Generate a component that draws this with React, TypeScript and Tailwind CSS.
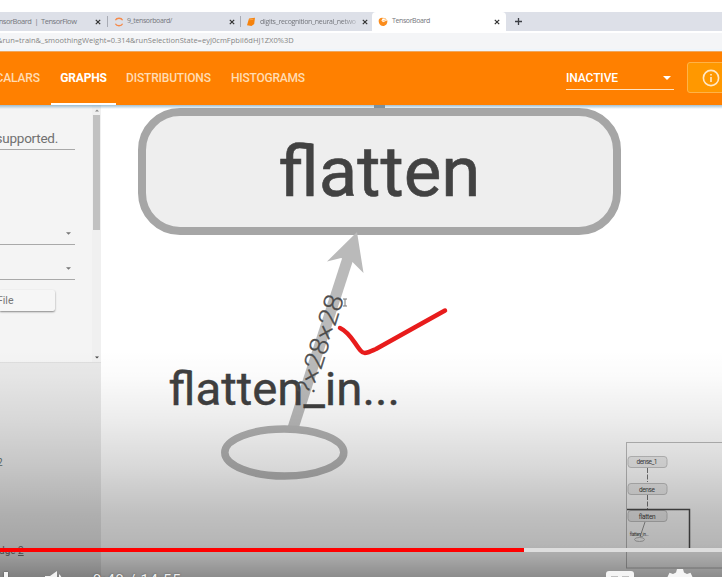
import React from "react";

function Favicon({ kind }: { kind: "jupyter" | "notebook" | "tensor" }) {
  if (kind === "jupyter") {
    return (
      <svg className="h-[10px] w-[10px] shrink-0" viewBox="0 0 10 10" fill="none" stroke="#f58a4b" strokeWidth="1.3">
        <path d="M1.4 3.2C2.6 .6 7.4 .6 8.6 3.2M1.4 6.8C2.6 9.4 7.4 9.4 8.6 6.8" />
      </svg>
    );
  }
  if (kind === "notebook") {
    return (
      <svg className="h-[10px] w-[10px] shrink-0" viewBox="0 0 10 10">
        <path d="M3 1.5 9 .8 8.2 7 5.5 9 1 8.2Z" fill="#f5820d" />
        <path d="M3.4 2.8 7.4 2.3" stroke="#ffb566" strokeWidth=".6" />
      </svg>
    );
  }
  return (
    <svg className="h-[10px] w-[10px] shrink-0" viewBox="0 0 10 10">
      <path d="M.8 2.8C1.5 1 3.5.4 5 .9L3.4 3.6 5 5.3 9.3 3.2C9.8 6.5 7.8 9 5 9 2 9 .2 6 .8 2.8Z" fill="#fb8c1c" />
      <path d="M4.2 4.2 8.6 2.6M5 1.2 8 1.8" stroke="#ffc98a" strokeWidth="1.1" />
    </svg>
  );
}

function Cross() {
  return (
    <svg className="h-[6px] w-[6px] shrink-0" viewBox="0 0 6 6" stroke="#333" strokeWidth="1.2">
      <path d="M.8.8 5.2 5.2M5.2.8.8 5.2" />
    </svg>
  );
}

function BrowserTabs() {
  return (
    <div className="flex h-[19px] shrink-0 items-center bg-[#dde0e8] font-['Open_Sans',sans-serif] text-[7.5px] text-[#74767c]">
      <div className="flex h-full w-[107px] items-center overflow-hidden">
        <span className="-ml-[5px] w-[100px] whitespace-nowrap tracking-[-0.47px]">
          ensorBoard&nbsp; |&nbsp; TensorFlow
        </span>
        <Cross />
      </div>
      <div className="flex h-[11px] w-[133px] items-center border-l border-[#a8abb4] pl-[6px]">
        <Favicon kind="jupyter" />
        <span className="ml-[3px] w-[102px] whitespace-nowrap text-[7px] tracking-[-0.38px]">9_tensorboard/</span>
        <Cross />
      </div>
      <div className="flex h-[11px] w-[132px] items-center border-l border-[#a8abb4] pl-[5px]">
        <Favicon kind="notebook" />
        <span className="ml-[4px] mr-[5px] w-[97px] whitespace-nowrap text-[7px] leading-[12px] tracking-[-0.3px] [mask-image:linear-gradient(to_right,#000_85%,rgba(0,0,0,0.3))]">
          digits_recognition_neural_netwo
        </span>
        <Cross />
      </div>
      <div className="flex h-full w-[134px] items-center rounded-t-[4px] bg-white pl-[6px]">
        <Favicon kind="tensor" />
        <span className="ml-[4px] w-[102px] whitespace-nowrap text-[7px] tracking-[-0.4px]">TensorBoard</span>
        <Cross />
      </div>
      <svg className="ml-[9px] h-[7px] w-[7px]" viewBox="0 0 7 7" stroke="#3c3f45" strokeWidth="1.3">
        <path d="M3.5 0V7M0 3.5H7" />
      </svg>
    </div>
  );
}

function Header() {
  return (
    <div className="flex h-[54px] shrink-0 items-center overflow-hidden border-t border-[#f0a75c] bg-[#ff8000] font-[Roboto,sans-serif] text-[12px] font-medium text-[#ffdcb2]">
      <div className="flex h-full w-[51px] items-center justify-end pb-px pr-[11px]">
        <span className="whitespace-nowrap tracking-[-0.1px]">SCALARS</span>
      </div>
      <div className="flex h-full w-[65px] items-center justify-center border-b-2 border-t border-b-white border-t-transparent text-white">
        <span className="font-bold tracking-[-0.15px]">GRAPHS</span>
      </div>
      <span className="mb-px ml-[10px] w-[85px] whitespace-nowrap tracking-[-0.17px]">DISTRIBUTIONS</span>
      <span className="mb-px ml-[20px] whitespace-nowrap tracking-[-0.22px]">HISTOGRAMS</span>
      <div className="mb-px ml-auto flex h-[24px] w-[108px] shrink-0 items-center justify-between border-b border-[#ffe3c2] pr-[3px] text-white">
        <span className="tracking-[-0.1px]">INACTIVE</span>
        <svg className="h-[4px] w-[8px]" viewBox="0 0 8 4" fill="#fff"><path d="M0 0H8L4 4Z" /></svg>
      </div>
      <div className="mb-[2px] ml-[13px] mr-[-9px] flex h-[31px] w-[44px] shrink-0 items-center rounded-[3px] border border-[#ffb347] bg-[#ff9800] pl-[14px]">
        <svg className="h-[18px] w-[18px]" viewBox="0 0 18 18" fill="none" stroke="#ffe8c7" strokeWidth="1.6">
          <circle cx="9" cy="9" r="7.6" />
          <path d="M9 8V13M9 5V6.6" />
        </svg>
      </div>
    </div>
  );
}

function Caret({ className }: { className: string }) {
  return (
    <svg className={className} viewBox="0 0 6 3"><path d="M0 0H6L3 3Z" /></svg>
  );
}

function Sidebar() {
  return (
    <div className="flex w-[101px] shrink-0 flex-col bg-[#e9e9e9] font-[Roboto,sans-serif]">
      <div className="flex h-[258px] shrink-0 border-b border-[#dedede] bg-[#f4f4f4]">
        <div className="flex w-[92px] flex-col overflow-hidden">
          <div className="flex h-[45px] w-[75px] items-end justify-end border-b border-[#a9a9a9] pb-[2px] pr-[17px]">
            <span className="whitespace-nowrap text-[13.5px] leading-[17px] tracking-[-0.25px] text-[#707070]">supported.</span>
          </div>
          <div className="flex h-[95px] w-[75px] items-end justify-end border-b border-[#a9a9a9] pb-[9px] pr-[4px]">
            <Caret className="h-[3px] w-[5px] fill-[#777]" />
          </div>
          <div className="flex h-[35px] w-[75px] items-end justify-end border-b border-[#a9a9a9] pb-[9px] pr-[4px]">
            <Caret className="h-[3px] w-[5px] fill-[#777]" />
          </div>
          <div className="mt-[10px] flex h-[21px] w-[55px] items-center justify-start rounded-r-[2px] bg-[#f6f6f6] text-[10.5px] text-[#777] shadow-[0_1px_2px_rgba(0,0,0,0.45)]">
            <span className="-ml-[3px]">File</span>
          </div>
        </div>
        <div className="flex w-[9px] flex-col items-center bg-[#f0f0f0]">
          <Caret className="mb-[3px] mt-[4px] h-[3px] w-[4px] rotate-180 fill-[#888]" />
          <div className="h-[115px] w-[7px] bg-[#c1c1c1]" />
          <Caret className="mb-[3px] mt-auto h-[3px] w-[4px] fill-[#444]" />
        </div>
      </div>
      <div className="mt-[94px] overflow-hidden text-[10px] leading-[12px] text-[#61706f]">
        <span className="-ml-[3px]">2</span>
      </div>
      <div className="mt-[76px] overflow-hidden text-[10px] leading-[12px] text-[#707070]">
        <span className="-ml-[1px] whitespace-nowrap">dge <u>2</u></span>
      </div>
    </div>
  );
}

function Graph() {
  return (
    <svg className="h-[472px] w-[621px] shrink-0 bg-white font-[Roboto,sans-serif]" viewBox="101 105 621 472">
      <rect x="374" y="100" width="11" height="12" fill="#8e8e8e" />
      <rect x="142" y="112" width="475" height="119" rx="38" fill="#eee" stroke="#a6a6a6" strokeWidth="8" />
      <text x="278.5" y="196" fontSize="69.5" textLength="202" lengthAdjust="spacingAndGlyphs" fill="#424242" stroke="#424242" strokeWidth=".6">flatten</text>
      <path d="M293 428 348 258" stroke="#bababa" strokeWidth="11" />
      <path d="M357 232 363.5 273 352.5 262 341 258 327 261.5Z" fill="#bababa" />
      <text x="168.5" y="405" fontSize="46" textLength="231.5" lengthAdjust="spacingAndGlyphs" fill="#404040" stroke="#404040" strokeWidth=".4">flatten_in...</text>
      <g transform="translate(312.5 397) rotate(-72.3)">
        <text x="0" y="0" fontSize="26" fontWeight="300" textLength="104" lengthAdjust="spacingAndGlyphs" fill="#4c4c4c" stroke="#4c4c4c" strokeWidth=".3">?×28×28</text>
      </g>
      <path d="M343 299H347M345 299V306M343 306H347" stroke="#777" strokeWidth="1" fill="none" />
      <ellipse cx="284.3" cy="452.5" rx="59.5" ry="23.5" fill="#fff" stroke="#b2b2b2" strokeWidth="7.5" />
      <g stroke="#bcbcbc" fill="none">
        <rect x="626.5" y="442.5" width="110" height="125.5" />
        <g fill="#ededed" stroke="#c5c5c5">
          <rect x="628" y="456.5" width="39" height="11" rx="3" />
          <rect x="628" y="483.5" width="39" height="11" rx="3" />
          <rect x="628" y="510.5" width="39" height="11" rx="3" />
        </g>
        <path d="M647.5 468V482M647.5 495V509" stroke="#777" strokeDasharray="5 1.5" />
        <path d="M645 522 640 537" stroke="#999" />
        <ellipse cx="639.5" cy="539.5" rx="5" ry="2" />
        <path d="M627 509.5H689.5V550H627" stroke="#4d4d4d" strokeWidth="1.5" />
      </g>
      <g fill="#444" fontSize="6.5" textAnchor="middle">
        <text x="647" y="464.3" textLength="21">dense_1</text>
        <text x="647" y="491.5" textLength="16">dense</text>
        <text x="647" y="518.5" textLength="17">flatten</text>
        <text x="639" y="536" fontSize="4.5" textLength="19">flatten_in...</text>
      </g>
    </svg>
  );
}

function PlayerOverlay() {
  return (
    <div className="absolute inset-0 overflow-hidden">
      <div className="absolute inset-x-0 bottom-0 h-[227px] bg-[linear-gradient(to_bottom,transparent_0px,rgba(0,0,0,0.015)_25px,rgba(0,0,0,0.075)_70px,rgba(0,0,0,0.15)_115px,rgba(0,0,0,0.25)_165px,rgba(0,0,0,0.29)_195px,rgba(0,0,0,0.34)_207px,rgba(0,0,0,0.45)_227px)]" />
      <svg className="absolute inset-0 h-[577px] w-[722px]" viewBox="0 0 722 577" fill="none">
        <path d="M340 328C351 333 355 345 361 351C364 355 369 352 376 349L445 310.5" stroke="#e81c1c" strokeWidth="4.5" strokeLinecap="round" strokeLinejoin="round" />
      </svg>
      <div className="absolute inset-x-0 top-[548px] flex h-[4px] bg-[#dedede]">
        <div className="w-[524px] bg-[#f00]" />
      </div>
      <div className="absolute inset-x-0 top-[568px] flex h-[24px] items-start overflow-hidden font-[Roboto,sans-serif] text-[#eee]">
        <div className="ml-[4px] mt-[4px] h-[16px] w-[4px] bg-[#f4f4f4] shadow-[0_0_2px_rgba(0,0,0,0.5)]" />
        <svg className="ml-[36px] mt-[2px] h-[20px] w-[22px]" viewBox="0 0 22 20" fill="#f2f2f2">
          <path d="M1 6H6L13 1V19L6 14H1ZM15 4C19 7 19 13 15 16V13C17 11 17 9 15 7Z" />
        </svg>
        <span className="ml-[27px] mt-[4px] whitespace-nowrap text-[15px] leading-[17px] tracking-[0.7px] [text-shadow:0_0_2px_rgba(0,0,0,0.5)]">9:49 / 14:55</span>
        <svg className="ml-auto mt-[2px] h-[22px] w-[30px]" viewBox="0 0 30 22">
          <rect x="1" y="1" width="28" height="21" rx="3" fill="#f5f5f5" />
          <path d="M6 6H13V8H8V14H13V16H6ZM17 6H24V8H19V14H24V16H17Z" fill="#c0c0c0" />
        </svg>
        <svg className="ml-[32px] mr-[29px] h-[26px] w-[26px]" viewBox="0 0 26 26" fill="#f5f5f5">
          <path d="M10 1H16L17 4.5 20 6 23.5 4.8 26 10 23 13 26 16 23 21H3L0 16 3 13 0 10 2.5 4.8 6 6 9 4.5Z" />
        </svg>
      </div>
    </div>
  );
}

export default function App() {
  return (
    <div className="relative flex h-[577px] w-[722px] flex-col overflow-hidden bg-white pt-[12px]">
      <BrowserTabs />
      <div className="flex h-[20px] shrink-0 items-center overflow-hidden border-y-2 border-t-white border-b-[#eef5fb] bg-[#f4f5f7] font-['Open_Sans',sans-serif] text-[7.5px] text-[#858585]">
        <span className="-ml-[3px] whitespace-nowrap tracking-[0.02px]">&amp;run=train&amp;_smoothingWeight=0.314&amp;runSelectionState=eyJ0cmFpbiI6dHJ1ZX0%3D</span>
      </div>
      <Header />
      <div className="relative flex h-[472px] shrink-0">
        <Sidebar />
        <Graph />
        <div className="absolute inset-x-0 top-0 h-[4px] bg-linear-to-b from-[#6496b4]/60 to-transparent" />
      </div>
      <PlayerOverlay />
    </div>
  );
}
